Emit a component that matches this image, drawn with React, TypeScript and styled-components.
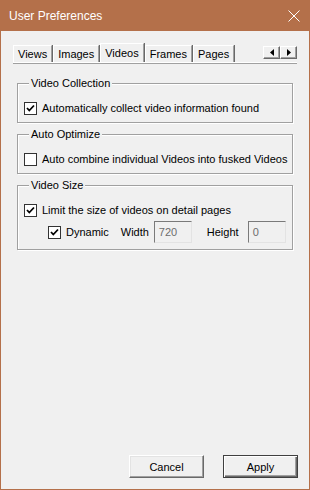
import styled, { createGlobalStyle } from 'styled-components';

const GlobalStyle = createGlobalStyle`
  html, body {
    margin: 0;
    padding: 0;
    background: #f0f0f0;
  }
  body {
    font-family: 'Liberation Sans', Arial, sans-serif;
    font-size: 11px;
    color: #000;
  }
`;

const Window = styled.div`
  width: 310px;
  height: 490px;
  box-sizing: border-box;
  border: 1px solid #b4704a;
  border-top: none;
  display: flex;
  flex-direction: column;
  background: #f0f0f0;
  white-space: nowrap;
`;

const TitleBar = styled.div`
  height: 31px;
  flex: none;
  background: #b4704a;
  display: flex;
  align-items: center;
  justify-content: space-between;
  padding: 0 9px 0 8px;
  color: #fff;
  font-size: 12px;
`;

const CloseButton = styled.div`
  display: flex;
  align-items: center;
`;

const Body = styled.div`
  flex: 1;
  display: flex;
  flex-direction: column;
  padding: 12px 12px 11px 12px;
`;

const TabStrip = styled.div`
  display: flex;
  align-items: flex-end;
  height: 19px;
`;

const Tab = styled.div<{ $active?: boolean }>`
  height: ${(p) => (p.$active ? 19 : 17)}px;
  box-sizing: border-box;
  display: flex;
  align-items: center;
  padding: 0 4px;
  margin-right: 1px;
  border-top: 1px solid #fff;
  border-left: 1px solid #fff;
  border-right: 1px solid #a0a0a0;
  box-shadow: 1px 0 0 #696969;
  background: #f0f0f0;
`;

const ArrowGroup = styled.div`
  margin-left: auto;
  margin-bottom: 3px;
  display: flex;
`;

const ArrowButton = styled.div`
  width: 17px;
  height: 13px;
  box-sizing: border-box;
  display: flex;
  align-items: center;
  justify-content: center;
  border: 1px solid;
  border-color: #fff #696969 #696969 #fff;
  box-shadow: inset -1px -1px 0 #a0a0a0;
  background: #f0f0f0;
`;

const Panel = styled.div`
  display: flex;
  flex-direction: column;
  gap: 3px;
  padding: 12px 4px 0 4px;
  border-top: 1px solid #fff;
  box-shadow: inset 0 1px 0 #a0a0a0;
`;

const Group = styled.fieldset`
  margin: 0;
  padding: 9px 6px 6px 6px;
  border: 1px solid #a0a0a0;
  box-shadow: 1px 1px 0 #fff, inset 1px 1px 0 #fff;
  min-inline-size: 0;
  display: flex;
  flex-direction: column;
  gap: 3px;
`;

const Legend = styled.legend`
  margin-left: 5px;
  padding: 0 2px;
  line-height: 16px;
  background: #f0f0f0;
`;

const Row = styled.div<{ $indent?: number }>`
  display: flex;
  align-items: center;
  min-height: 16px;
  padding-left: ${(p) => p.$indent ?? 0}px;
`;

const CheckLabel = styled.label`
  display: flex;
  align-items: center;
  gap: 5px;
  line-height: 16px;
`;

const Box = styled.span`
  width: 13px;
  height: 13px;
  box-sizing: border-box;
  flex: none;
  border: 1px solid #333;
  background: #fff;
  display: flex;
  align-items: center;
  justify-content: center;
`;

const FieldLabel = styled.span<{ $width: number; $offset: number }>`
  width: ${(p) => p.$width}px;
  margin-left: ${(p) => p.$offset}px;
  flex: none;
`;

const TextBox = styled.div`
  width: 38px;
  height: 22px;
  box-sizing: border-box;
  padding: 0 4px;
  display: flex;
  align-items: center;
  border: 1px solid;
  border-color: #7a7a7a #e3e3e3 #e3e3e3 #7a7a7a;
  color: #6d6d6d;
  background: #f0f0f0;
`;

const Spacer = styled.div`
  flex: 1;
`;

const ButtonRow = styled.div`
  display: flex;
  justify-content: flex-end;
  gap: 19px;
  margin-right: -1px;
`;

const Button = styled.button<{ $default?: boolean }>`
  width: 75px;
  height: 23px;
  box-sizing: border-box;
  font-family: inherit;
  font-size: 11px;
  color: #000;
  background: #f0f0f0;
  padding: 0;
  border: 1px solid;
  border-color: ${(p) =>
    p.$default ? '#404040' : '#fff #696969 #696969 #fff'};
  box-shadow: ${(p) =>
    p.$default
      ? 'inset 1px 1px 0 #fff, inset -1px -1px 0 #696969, inset -2px -2px 0 #a0a0a0'
      : 'inset -1px -1px 0 #a0a0a0, inset 1px 1px 0 #e3e3e3'};
`;

const Check = ({ checked }: { checked?: boolean }) => (
  <Box>
    {checked && (
      <svg width="9" height="9" viewBox="0 0 9 9">
        <polyline
          points="1,4 3.3,6.5 8,1.5"
          fill="none"
          stroke="#000"
          strokeWidth="1.8"
        />
      </svg>
    )}
  </Box>
);

const CheckBox = ({ checked, label }: { checked?: boolean; label: string }) => (
  <CheckLabel>
    <Check checked={checked} />
    {label}
  </CheckLabel>
);

const tabs = ['Views', 'Images', 'Videos', 'Frames', 'Pages'];

const App = () => {
  return (
    <>
      <GlobalStyle />
      <Window>
        <TitleBar>
          <span>User Preferences</span>
          <CloseButton>
            <svg width="12" height="12" viewBox="0 0 12 12">
              <path d="M0.5 0.5 L11.5 11.5 M11.5 0.5 L0.5 11.5" stroke="#fff" strokeWidth="1" />
            </svg>
          </CloseButton>
        </TitleBar>
        <Body>
          <TabStrip>
            {tabs.map((t) => (
              <Tab key={t} $active={t === 'Videos'}>
                {t}
              </Tab>
            ))}
            <ArrowGroup>
              <ArrowButton>
                <svg width="4" height="7" viewBox="0 0 4 7">
                  <polygon points="4,0 4,7 0,3.5" fill="#000" />
                </svg>
              </ArrowButton>
              <ArrowButton>
                <svg width="4" height="7" viewBox="0 0 4 7">
                  <polygon points="0,0 0,7 4,3.5" fill="#000" />
                </svg>
              </ArrowButton>
            </ArrowGroup>
          </TabStrip>
          <Panel>
            <Group>
              <Legend>Video Collection</Legend>
              <Row>
                <CheckBox checked label="Automatically collect video information found" />
              </Row>
            </Group>
            <Group>
              <Legend>Auto Optimize</Legend>
              <Row>
                <CheckBox label="Auto combine individual Videos into fusked Videos" />
              </Row>
            </Group>
            <Group>
              <Legend>Video Size</Legend>
              <Row>
                <CheckBox checked label="Limit the size of videos on detail pages" />
              </Row>
              <Row $indent={24}>
                <CheckBox checked label="Dynamic" />
                <FieldLabel $width={33} $offset={12}>Width</FieldLabel>
                <TextBox>720</TextBox>
                <FieldLabel $width={41} $offset={15}>Height</FieldLabel>
                <TextBox>0</TextBox>
              </Row>
            </Group>
          </Panel>
          <Spacer />
          <ButtonRow>
            <Button>Cancel</Button>
            <Button $default>Apply</Button>
          </ButtonRow>
        </Body>
      </Window>
    </>
  );
};

export default App;
